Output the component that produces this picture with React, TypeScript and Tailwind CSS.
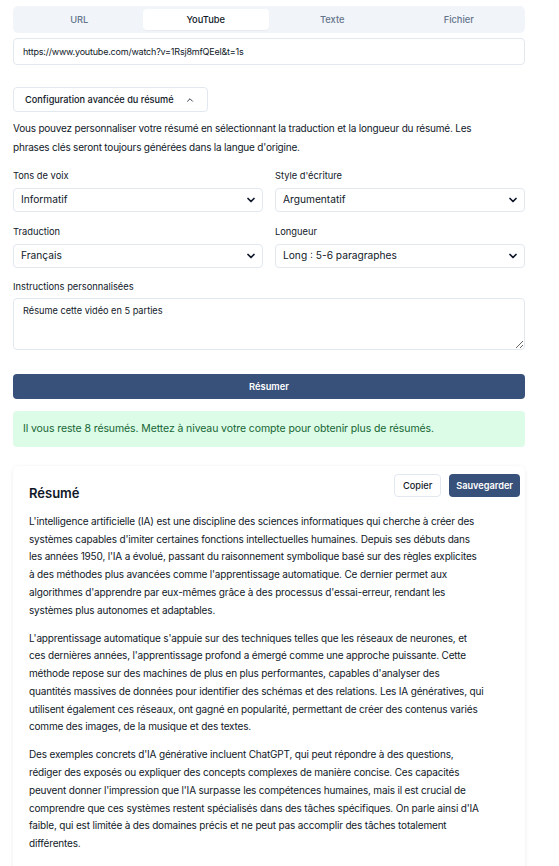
import { useState } from "react"

const tabs = ["URL", "YouTube", "Texte", "Fichier"]

// line breaks as in the rendered summary
const paragraphs = [
  [
    "L'intelligence artificielle (IA) est une discipline des sciences informatiques qui cherche à créer des",
    "systèmes capables d'imiter certaines fonctions intellectuelles humaines. Depuis ses débuts dans",
    "les années 1950, l'IA a évolué, passant du raisonnement symbolique basé sur des règles explicites",
    "à des méthodes plus avancées comme l'apprentissage automatique. Ce dernier permet aux",
    "algorithmes d'apprendre par eux-mêmes grâce à des processus d'essai-erreur, rendant les",
    "systèmes plus autonomes et adaptables.",
  ],
  [
    "L'apprentissage automatique s'appuie sur des techniques telles que les réseaux de neurones, et",
    "ces dernières années, l'apprentissage profond a émergé comme une approche puissante. Cette",
    "méthode repose sur des machines de plus en plus performantes, capables d'analyser des",
    "quantités massives de données pour identifier des schémas et des relations. Les IA génératives, qui",
    "utilisent également ces réseaux, ont gagné en popularité, permettant de créer des contenus variés",
    "comme des images, de la musique et des textes.",
  ],
  [
    "Des exemples concrets d'IA générative incluent ChatGPT, qui peut répondre à des questions,",
    "rédiger des exposés ou expliquer des concepts complexes de manière concise. Ces capacités",
    "peuvent donner l'impression que l'IA surpasse les compétences humaines, mais il est crucial de",
    "comprendre que ces systèmes restent spécialisés dans des tâches spécifiques. On parle ainsi d'IA",
    "faible, qui est limitée à des domaines précis et ne peut pas accomplir des tâches totalement",
    "différentes.",
  ],
]

function Chevron() {
  return (
    <svg className="pointer-events-none absolute right-[6px] top-1/2 h-[12px] w-[12px] -translate-y-1/2 text-gray-900" viewBox="0 0 24 24" fill="none" stroke="currentColor" strokeWidth={3.5} strokeLinecap="round" strokeLinejoin="round">
      <path d="m6 9 6 6 6-6" />
    </svg>
  )
}

function Field({ label, value, options }: { label: string; value: string; options: string[] }) {
  return (
    <div className="flex flex-col">
      <label className="mb-[6px] text-[9.3px] leading-[13px] text-gray-900">{label}</label>
      <div className="relative">
        <select
          defaultValue={value}
          className="block h-[24px] w-full appearance-none rounded-[4px] border border-[#e2e8f0] bg-white pl-[7px] pr-6 text-[10.2px] text-gray-900 outline-none"
        >
          {options.map((o) => (
            <option key={o}>{o}</option>
          ))}
        </select>
        <Chevron />
      </div>
    </div>
  )
}

export default function App() {
  const [tab, setTab] = useState("YouTube")
  const [open, setOpen] = useState(true)

  return (
    <div className="min-h-screen bg-white font-['Inter',sans-serif] text-gray-900">
      <div className="ml-[13px] w-[512px] pt-[6px] pb-6">
        <div className="grid h-[27px] grid-cols-4 rounded-[5px] bg-[#f1f5f9] p-[3px]">
          {tabs.map((t) => (
            <button
              key={t}
              onClick={() => setTab(t)}
              className={
                t === tab
                  ? "rounded-[4px] bg-white text-[9.3px] font-medium text-gray-900 shadow-[0_1px_1px_rgba(0,0,0,0.04)]"
                  : "rounded-[4px] text-[9.3px] font-medium text-[#64748b]"
              }
            >
              {t}
            </button>
          ))}
        </div>

        <input
          defaultValue="https://www.youtube.com/watch?v=1Rsj8mfQEel&t=1s"
          className="mt-[5px] block h-[27px] w-full rounded-[4px] border border-[#e2e8f0] px-[9px] text-[9px] tracking-[-0.2px] text-gray-900 outline-none"
        />

        <button
          onClick={() => setOpen(!open)}
          className="mt-[22px] flex h-[25px] items-center gap-[11px] rounded-[4px] border border-[#e2e8f0] bg-white pl-[11px] pr-[12px] text-[9.2px] font-medium text-gray-900"
        >
          Configuration avancée du résumé
          <svg className={open ? "h-[10px] w-[10px]" : "h-[10px] w-[10px] rotate-180"} viewBox="0 0 24 24" fill="none" stroke="currentColor" strokeWidth={2} strokeLinecap="round" strokeLinejoin="round">
            <path d="m18 15-6-6-6 6" />
          </svg>
        </button>

        {open && (
          <div>
            <p className="mt-[7px] w-[480px] text-[10px] leading-[19px] tracking-[-0.2px] text-gray-900">
              Vous pouvez personnaliser votre résumé en sélectionnant la traduction et la longueur du résumé. Les phrases clés seront toujours générées dans la langue d'origine.
            </p>

            <div className="mt-[12px] grid grid-cols-2 gap-x-[12px] gap-y-[13px]">
              <Field label="Tons de voix" value="Informatif" options={["Informatif", "Formel", "Décontracté"]} />
              <Field label="Style d'écriture" value="Argumentatif" options={["Argumentatif", "Narratif", "Descriptif"]} />
              <Field label="Traduction" value="Français" options={["Français", "English", "Español"]} />
              <Field label="Longueur" value="Long : 5-6 paragraphes" options={["Court : 1-2 paragraphes", "Moyen : 3-4 paragraphes", "Long : 5-6 paragraphes"]} />
            </div>

            <label className="mt-[12px] mb-[5px] block text-[9.3px] leading-[13px] text-gray-900">Instructions personnalisées</label>
            <textarea
              defaultValue="Résume cette vidéo en 5 parties"
              className="block h-[52px] w-full rounded-[4px] border border-[#e2e8f0] px-[9px] py-[5px] text-[9.2px] text-gray-900 outline-none"
            />
          </div>
        )}

        <button className="mt-[24px] block h-[25px] w-full rounded-[4px] bg-[#38517a] text-[9.3px] font-semibold text-white">
          Résumer
        </button>

        <div className="mt-[12px] flex h-[36px] items-center rounded-[4px] bg-[#dcfce7] px-[10px] text-[10.5px] tracking-[-0.1px] text-[#166534]">
          Il vous reste 8 résumés. Mettez à niveau votre compte pour obtenir plus de résumés.
        </div>

        <div className="mt-[19px] rounded-[6px] bg-white pb-4 pl-4 pr-[5px] pt-[8px] shadow-[0_1px_4px_rgba(0,0,0,0.08)]">
          <div className="flex items-start justify-between">
            <h2 className="mt-[10px] text-[13px] font-semibold leading-[18px] text-gray-900">Résumé</h2>
            <div className="flex gap-[8px]">
              <button className="h-[23px] rounded-[4px] border border-[#e2e8f0] bg-white px-[8px] text-[9.2px] font-medium text-gray-900">Copier</button>
              <button className="h-[23px] rounded-[4px] bg-[#38517a] px-[7px] text-[9.2px] font-semibold text-white">Sauvegarder</button>
            </div>
          </div>
          <div className="mt-[11px] pr-[10px]">
            {paragraphs.map((lines, i) => (
              <p key={i} className="mb-[10.5px] whitespace-nowrap text-[10px] leading-[17.7px] tracking-[-0.17px] text-gray-900">
                {lines.map((l, j) => (
                  <span key={j} className="block">
                    {l}
                  </span>
                ))}
              </p>
            ))}
          </div>
        </div>
      </div>
    </div>
  )
}
